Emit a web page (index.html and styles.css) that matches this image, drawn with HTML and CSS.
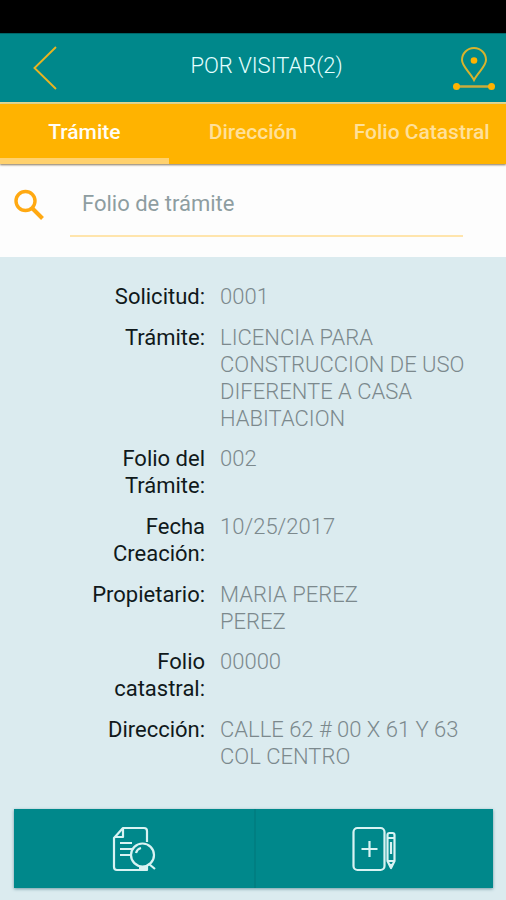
FILE: index.html
```html
<!DOCTYPE html>
<html lang="es">
<head>
<meta charset="utf-8">
<meta name="viewport" content="width=device-width, initial-scale=1">
<title>Por visitar</title>
<link rel="stylesheet" href="styles.css">
</head>
<body>
<div class="status-bar"></div>
<header class="app-bar">
  <button class="icon-button" type="button" aria-label="Regresar">
    <svg width="24" height="44" viewBox="0 0 24 44" fill="none" stroke="#e9b420" stroke-width="1.9"><path d="M23 1 1.500 22 23 43"/></svg>
  </button>
  <h1 class="title">POR VISITAR(2)</h1>
  <button class="icon-button" type="button" aria-label="Mapa">
    <svg width="44" height="46" viewBox="0 0 44 46" fill="none">
      <path d="M22 35C18 27 10 21.500 10 15a12 12 0 0 1 24 0C34 21.500 26 27 22 35Z" stroke="#d9b32c" stroke-width="2"/>
      <circle cx="22" cy="15.500" r="3.300" fill="#ffb300"/>
      <path d="M4 41.500h36" stroke="#c9ac3c" stroke-width="2.400"/>
      <circle cx="4.500" cy="41.500" r="3.500" fill="#ffb300"/>
      <circle cx="39.500" cy="41.500" r="3.500" fill="#ffb300"/>
    </svg>
  </button>
</header>
<nav class="tabs">
  <button class="tab tab-active" type="button">Trámite</button>
  <button class="tab" type="button">Dirección</button>
  <button class="tab" type="button">Folio Catastral</button>
</nav>
<form class="search">
  <label class="search-label" for="folio" aria-label="Folio de trámite">
    <svg width="32" height="32" viewBox="0 0 32 32" fill="none" stroke="#ffa912"><circle cx="12.500" cy="12" r="9.500" stroke-width="3.400"/><path d="m19 19 10.500 10.500" stroke-width="4"/></svg>
  </label>
  <input class="search-input" id="folio" type="text" placeholder="Folio de trámite">
</form>
<main class="content">
  <dl class="details">
    <div class="row"><dt>Solicitud:</dt><dd>0001</dd></div>
    <div class="row"><dt>Trámite:</dt><dd>LICENCIA PARA CONSTRUCCION DE USO DIFERENTE A CASA HABITACION</dd></div>
    <div class="row"><dt>Folio del Trámite:</dt><dd>002</dd></div>
    <div class="row"><dt>Fecha Creación:</dt><dd>10/25/2017</dd></div>
    <div class="row"><dt>Propietario:</dt><dd>MARIA PEREZ<br>PEREZ</dd></div>
    <div class="row"><dt>Folio catastral:</dt><dd>00000</dd></div>
    <div class="row"><dt>Dirección:</dt><dd>CALLE 62 # 00 X 61 Y 63<br>COL CENTRO</dd></div>
  </dl>
  <div class="actions">
    <button class="action" type="button" aria-label="Ver detalle">
      <svg width="44" height="46" viewBox="0 0 44 46" fill="none" stroke="#d9f3f3" stroke-width="2.200" stroke-linejoin="round">
        <path d="M35 16V5a3 3 0 0 0-3-3H11L2 12v29a3 3 0 0 0 3 3h30v-4"/>
        <path d="M11 2v9H3"/>
        <path d="M8 17h12M8 23h12M8 29h11"/>
        <circle cx="30.500" cy="29" r="11.500"/>
        <path d="M24 27a7 7 0 0 1 5-5M37 38l6 5"/>
        <path d="M27 42.500h8" stroke-width="4"/>
      </svg>
    </button>
    <button class="action" type="button" aria-label="Agregar visita">
      <svg width="44" height="46" viewBox="0 0 44 46" fill="none" stroke="#d9f3f3" stroke-width="2.200" stroke-linejoin="round">
        <rect x="1.500" y="2" width="31" height="42" rx="4"/>
        <path d="M17.500 15v16M9.500 23h16"/>
        <path d="M35.500 12h7v23L39 42l-3.500-7ZM35.500 12V9a2 2 0 0 1 2-2h3a2 2 0 0 1 2 2v3M35.500 35h7M39 16v12"/>
        <path d="m38 38 1 3 1-3"/>
      </svg>
    </button>
  </div>
</main>
</body>
</html>
```

FILE: styles.css
```css
* {
  box-sizing: border-box;
}

body {
  display: flex;
  flex-direction: column;
  min-height: 100vh;
  margin: 0;
  font-family: Roboto, "Liberation Sans", sans-serif;
  font-size: 22px;
  line-height: 27px;
  background: #dbebef;
}

button {
  border: 0;
  padding: 0;
  background: none;
  font: inherit;
  color: inherit;
  cursor: pointer;
}

svg {
  display: block;
}

.status-bar {
  height: 33px;
  background: #000;
}

.app-bar {
  display: grid;
  grid-template-columns: 48px 1fr 44px;
  align-items: center;
  height: 71px;
  padding: 0 10px 0 33px;
  background: #00888b;
  border-top: 1px solid #006668;
  border-bottom: 2px solid #e2d88f;
}

.icon-button {
  justify-self: start;
}

.title {
  margin: 0;
  padding-bottom: 6px;
  text-align: center;
  font-size: 22px;
  font-weight: 300;
  color: #e4ffff;
}

.tabs {
  position: relative;
  display: grid;
  grid-template-columns: repeat(3, 1fr);
  height: 60px;
  background: #ffb300;
  box-shadow: 0 1px 2px #84745c;
}

.tab {
  padding-top: 2px;
  border-bottom: 6px solid transparent;
  white-space: nowrap;
  font-size: 21px;
  font-weight: 500;
  color: #ffe09a;
}

.tab-active {
  border-color: #ffd16e;
  color: #fffdf5;
}

.search {
  display: flex;
  align-items: center;
  height: 93px;
  padding: 0 43px 12px 13px;
  background: #fdfdfd;
}

.search-label {
  width: 57px;
}

.search-input {
  flex: 1;
  min-width: 0;
  height: 64px;
  padding: 0 12px;
  border: 0;
  border-bottom: 2px solid #ffe5ad;
  background: none;
  font: inherit;
  color: #39484c;
  outline: 0;
}

.search-input::placeholder {
  color: #8e9da1;
  opacity: 1;
}

.content {
  display: flex;
  flex: 1;
  flex-direction: column;
  gap: 39px;
  padding: 26px 13px 12px 14px;
}

.details {
  display: flex;
  flex: 1;
  flex-direction: column;
  justify-content: space-between;
  margin: 0;
}

.row {
  display: grid;
  grid-template-columns: 7fr 10fr;
  gap: 15px;
}

dt {
  padding-left: 70px;
  text-align: right;
  color: #10191b;
}

dd {
  margin: 0;
  font-weight: 300;
  color: #7c898d;
}

.actions {
  display: grid;
  grid-template-columns: 1fr 1fr;
  box-shadow: 0 1px 3px #6f9ca6;
}

.action {
  display: flex;
  align-items: center;
  justify-content: center;
  height: 79px;
  background: #00888b;
}

.action + .action {
  border-left: 2px solid #007f82;
}
```
